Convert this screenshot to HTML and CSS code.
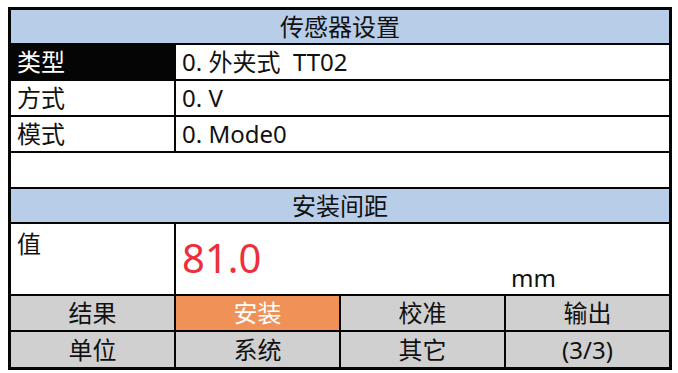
FILE: index.html
```html
<!DOCTYPE html>
<html lang="zh-CN">
  <head>
    <meta charset="UTF-8" />
    <meta name="viewport" content="width=device-width, initial-scale=1.0" />
    <title>传感器设置</title>
    <link rel="stylesheet" href="styles.css">
  </head>
  <body>
    <!-- Settings table -->
    <div class="panel">
      <div class="cell title">传感器设置</div>

      <div class="cell label active">类型</div>
      <div class="cell value">0. 外夹式&nbsp; TT02</div>

      <div class="cell label">方式</div>
      <div class="cell value">0. V</div>

      <div class="cell label">模式</div>
      <div class="cell value">0. Mode0</div>

      <div class="cell blank"></div>

      <div class="cell title">安装间距</div>

      <div class="cell label top">值</div>
      <div class="cell reading">
        <span class="number">81.0</span>
        <span class="unit">mm</span>
      </div>

      <!-- Menu buttons -->
      <div class="cell btn">结果</div>
      <div class="cell btn selected">安装</div>
      <div class="cell btn">校准</div>
      <div class="cell btn">输出</div>
      <div class="cell btn">单位</div>
      <div class="cell btn">系统</div>
      <div class="cell btn">其它</div>
      <div class="cell btn">(3/3)</div>
    </div>
  </body>
</html>
```

FILE: styles.css
```css
* {
  box-sizing: border-box;
}
body {
  margin: 0;
  background: #fff;
  font-family: "Noto Sans", "Noto Sans CJK SC", sans-serif;
  color: #111;
}

/* Table grid */
.panel {
  display: grid;
  grid-template-columns: repeat(4, 163px);
  grid-template-rows: 33px 34px 34px 34px 34px 33px 70px 34px 35px;
  gap: 2px;
  width: 664px;
  margin: 7px 0 0 8px;
  border: 3px solid #050505;
  background: #050505;
}
.cell {
  background: #fff;
  font-size: 24px;
  line-height: 1;
  display: flex;
  align-items: center;
  white-space: nowrap;
}

.title {
  grid-column: 1 / 5;
  justify-content: center;
  background: #b8cde8;
}
.label {
  padding-left: 6px;
}
.label.active {
  background: #050505;
  color: #fff;
}
.label.top {
  align-items: flex-start;
  padding-top: 8px;
}
.value {
  grid-column: 2 / 5;
  padding-left: 6px;
}
.blank {
  grid-column: 1 / 5;
}

/* Reading row */
.reading {
  grid-column: 2 / 5;
  display: grid;
  grid-template-columns: 330px 1fr;
  align-items: stretch;
}
.number {
  padding: 14px 0 0 6px;
  font-size: 40px;
  color: #ec2f3a;
}
.unit {
  align-self: end;
  padding: 0 0 4px 5px;
  font-size: 24px;
}

/* Buttons */
.btn {
  justify-content: center;
  background: #d0d0d0;
}
.btn.selected {
  background: #f09157;
  color: #fff;
}
```
